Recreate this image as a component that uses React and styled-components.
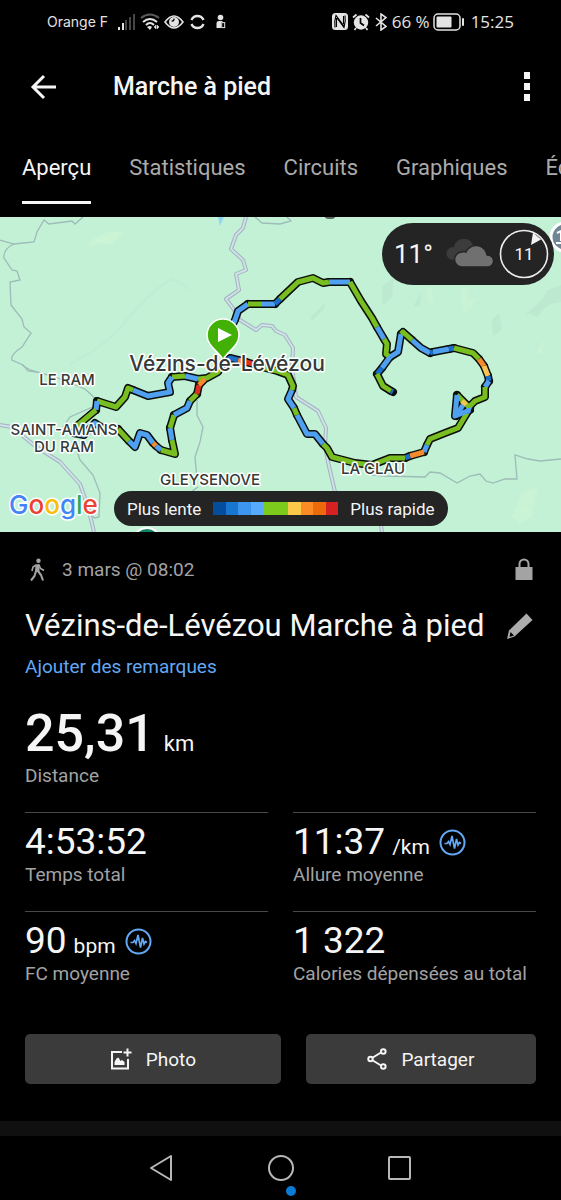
import { useState } from 'react';
import styled, { createGlobalStyle } from 'styled-components';

const COLORS = {
  white: '#f5f5f5',
  grey: '#a3a3a3',
  line: '#484848',
  blue: '#62a8f5',
  panel: '#242424',
};

const GlobalStyle = createGlobalStyle`
  * {
    box-sizing: border-box;
  }
  body {
    margin: 0;
    background: #000000;
    color: ${COLORS.white};
    font-family: Roboto, "Liberation Sans", sans-serif;
    overflow-x: hidden;
  }
  button {
    padding: 0;
    border: 0;
    background: none;
    color: inherit;
    font: inherit;
    cursor: pointer;
  }
  svg {
    display: block;
    flex-shrink: 0;
  }
`;

const Page = styled.div`
  min-height: 100vh;
  display: flex;
  flex-direction: column;
`;
const StatusBar = styled.div`
  display: flex;
  align-items: center;
  justify-content: space-between;
  height: 43px;
  padding: 0 47px;
  color: #e4e4e4;
  font-family: Inter, sans-serif;
`;
const StatusGroup = styled.div`
  display: flex;
  align-items: center;
  gap: ${({ $gap }) => $gap}px;
`;
const Carrier = styled.span`
  font-size: 14px;
  margin-right: 6px;
`;
const StatusText = styled.span`
  font-family: "Open Sans", sans-serif;
  font-size: 17px;
  line-height: 20px;
`;
const AppBar = styled.header`
  display: flex;
  align-items: center;
  height: 87px;
  padding: 0 30px;
`;
const AppTitle = styled.h1`
  flex: 1;
  margin: 0 0 0 56px;
  font-weight: 500;
  font-size: 25px;
  line-height: 32px;
`;
const Tabs = styled.nav`
  display: flex;
  gap: 38px;
  height: 87px;
  padding: 19px 0 0 22px;
  overflow: hidden;
`;
const Tab = styled.button`
  flex-shrink: 0;
  height: 55px;
  padding-bottom: 15px;
  border-bottom: 3px solid ${({ $active }) => ($active ? COLORS.white : 'transparent')};
  color: ${({ $active }) => ($active ? COLORS.white : '#ababab')};
  font-size: 22px;
  line-height: 34px;
`;

const MapWrap = styled.section`
  position: relative;
  height: 315px;
  overflow: hidden;
  background: #c3f1d5;
`;
const Weather = styled.div`
  position: absolute;
  top: 6px;
  right: 7px;
  display: flex;
  align-items: center;
  height: 62px;
  padding: 0 5px 0 12px;
  border-radius: 31px;
  background: ${COLORS.panel};
`;
const Temperature = styled.span`
  width: 51px;
  font-size: 26px;
`;
const Wind = styled.div`
  position: relative;
  display: grid;
  place-items: center;
  width: 50px;
  height: 50px;
  margin-left: 4px;
  font-size: 17px;
  svg {
    position: absolute;
    inset: 0;
  }
`;
const Legend = styled.div`
  position: absolute;
  left: 114px;
  bottom: 6px;
  display: flex;
  align-items: center;
  gap: 12px;
  height: 35px;
  padding: 0 13px;
  border-radius: 18px;
  background: ${COLORS.panel};
  font-size: 17px;
`;
const Scale = styled.div`
  display: flex;
  width: 125px;
  height: 13px;
`;
const Swatch = styled.span`
  flex: ${({ $wide }) => ($wide ? 2 : 1)};
  background: ${({ $color }) => $color};
`;

const Details = styled.main`
  display: flex;
  flex-direction: column;
  padding: 25px 25px 37px;
`;
const MetaRow = styled.div`
  display: flex;
  align-items: center;
  height: 25px;
  padding-right: 3px;
  color: ${COLORS.grey};
`;
const MetaDate = styled.span`
  flex: 1;
  margin-left: 12px;
  font-size: 19px;
`;
const TitleRow = styled.div`
  display: flex;
  align-items: center;
  justify-content: space-between;
  margin-top: 24px;
  padding-right: 3px;
`;
const ActivityTitle = styled.h2`
  margin: 0;
  font-weight: 400;
  font-size: 31px;
  line-height: 40px;
  white-space: nowrap;
`;
const Remarks = styled.a`
  align-self: flex-start;
  margin-top: 9px;
  color: ${COLORS.blue};
  font-size: 19px;
  line-height: 24px;
  text-decoration: none;
`;
const Stat = styled.div`
  padding-top: ${({ $main }) => ($main ? 25 : 8)}px;
  padding-bottom: 25px;
  border-top: ${({ $main }) => ($main ? '0' : `1px solid ${COLORS.line}`)};
`;
const StatLine = styled.div`
  display: flex;
  align-items: center;
  gap: 9px;
`;
const Value = styled.div`
  font-size: ${({ $main }) => ($main ? 52 : 37)}px;
  font-weight: ${({ $main }) => ($main ? 500 : 400)};
  line-height: ${({ $main }) => ($main ? 60 : 42)}px;
`;
const Unit = styled.span`
  margin-left: ${({ $main }) => ($main ? 9 : 7)}px;
  font-size: ${({ $main }) => ($main ? 22 : 21)}px;
  font-weight: 400;
  line-height: 1;
`;
const Label = styled.div`
  color: ${COLORS.grey};
  font-size: 19px;
  line-height: 23px;
`;
const StatGrid = styled.div`
  display: grid;
  grid-template-columns: 1fr 1fr;
  column-gap: 25px;
`;
const Actions = styled.div`
  display: flex;
  gap: 25px;
  margin-top: 24px;
`;
const ActionButton = styled.button`
  flex: ${({ $grow }) => $grow} 1 0;
  display: flex;
  align-items: center;
  justify-content: center;
  gap: 14px;
  height: 50px;
  border-radius: 5px;
  background: #3b3b3b;
  font-size: 19px;
`;
const Divider = styled.div`
  height: 15px;
  background: #101010;
`;
const SystemNav = styled.footer`
  position: relative;
  display: flex;
  align-items: center;
  justify-content: center;
  gap: 91px;
  height: 64px;
`;
const NavDot = styled.span`
  position: absolute;
  left: calc(50% + 5px);
  bottom: 4px;
  width: 10px;
  height: 10px;
  border-radius: 50%;
  background: #0a7bd6;
`;

const TABS = ['Aperçu', 'Statistiques', 'Circuits', 'Graphiques', 'Équipement'];

const LEGEND = [
  { color: '#044c9c' },
  { color: '#1976d0' },
  { color: '#3c95ee' },
  { color: '#58aafb' },
  { color: '#7ccb1c', wide: true },
  { color: '#fbc94a' },
  { color: '#fb8b24' },
  { color: '#ec6a0c' },
  { color: '#d42222' },
];

const STATS = [
  { value: '4:53:52', label: 'Temps total' },
  { value: '11:37', unit: '/km', label: 'Allure moyenne', pulse: true },
  { value: '90', unit: 'bpm', label: 'FC moyenne', pulse: true },
  { value: '1 322', label: 'Calories dépensées au total' },
];

const G = '#78be20';
const B = '#4fa0f0';
const D = '#1b6fc8';
const O = '#f58a2c';
const Y = '#f8c552';
const R = '#dd3020';

// Each piece of the walk: pace colour and its points
const ROUTE = [
  [B, '222,128 235,103 238,94 248,87'],
  [G, '248,87 262,87'],
  [B, '262,87 275,87'],
  [D, '275,87 280,82'],
  [G, '280,82 298,65 313,61 323,66 329,65'],
  [B, '329,65 350,65'],
  [G, '350,65 361,84 372,101 377,110'],
  [B, '377,110 384,122'],
  [G, '384,122 387,127 386,137 390,140'],
  [B, '390,140 398,135 401,117'],
  [G, '401,117 403,115 412,123'],
  [B, '412,123 421,131 430,136'],
  [D, '430,136 433,135'],
  [B, '433,135 449,132'],
  [D, '449,132 454,131'],
  [G, '454,131 473,136 479,142'],
  [O, '479,142 484,149'],
  [Y, '484,149 488,159'],
  [D, '488,159 489,164'],
  [B, '489,164 485,170'],
  [G, '485,170 485,180 475,184 470,189'],
  [B, '470,189 467,196'],
  [G, '467,196 458,211 445,216 430,222 427,228'],
  [B, '427,228 424,235'],
  [O, '424,235 410,239'],
  [D, '410,239 405,241'],
  [G, '405,241 390,241 372,248 355,246 332,240 327,231 323,227'],
  [B, '323,227 315,217 307,217 297,198'],
  [G, '297,198 294,191'],
  [B, '294,191 288,182 292,173'],
  [G, '292,173 293,169 288,158 277,154 262,150'],
  [Y, '262,150 253,147'],
  [R, '253,147 246,145'],
  [O, '246,145 238,143'],
  [D, '238,143 230,141 222,148'],
  [B, '390,140 382,151'],
  [D, '382,151 377,157'],
  [G, '377,157 383,169 391,174'],
  [D, '391,174 393,175'],
  [G, '470,191 457,178'],
  [Y, '466,188 462,184'],
  [B, '457,178 455,199 470,193'],
  [B, '456,199 463,188'],
  [G, '222,148 218,155 207,161 198,162'],
  [B, '198,162 185,159'],
  [G, '185,159 172,160'],
  [B, '172,160 168,166 170,175 148,179 133,173'],
  [G, '133,173 128,171 125,180 116,190 97,184'],
  [B, '97,184 96,193'],
  [G, '96,193 78,208 74,216'],
  [B, '74,216 84,218 95,206 106,213 118,212'],
  [G, '118,212 129,224'],
  [B, '129,224 135,230 140,216 147,218 153,226'],
  [O, '153,226 156,229'],
  [B, '156,229 161,233'],
  [G, '161,233 175,237 172,223'],
  [B, '172,223 170,211'],
  [G, '170,211 174,198'],
  [B, '174,198 187,191 190,184'],
  [G, '190,184 197,177'],
  [R, '197,177 199,168'],
  [O, '199,168 205,162'],
];

const THIN_ROADS = [
  'M83 0L75 7L72 4L49 7L44 3L37 15L34 25L14 27L0 23',
  'M14 27Q3 32 4 41L12 53L17 54L20 63L10 65L11 88L22 102L24 110L31 116L22 130Q10 138 12 143L23 148L28 154L37 155',
  'M22 148L30 153L55 160L85 172L97 183M97 188L70 200L63 210',
  'M76 231L80 243L93 258L100 276L99 300L95 301L86 296',
  'M197 183L197 198L203 210L200 225L195 240L197 262M198 270L187 278',
  'M372 258L385 259L425 260L430 255L440 256L457 266L470 259L480 257L486 264L493 266L505 262L517 262L515 238L528 242L540 244L561 242',
  'M255 0L262 6L280 7L291 4L287 0',
];
const MAIN_ROADS = [
  'M246 0L243 11L236 18L231 32L243 43L246 53L236 57L239 73L226 82L235 94L240 103L256 113L262 108L272 109L276 114L285 118L293 131L292 150L296 180L318 194L326 211L325 228L328 245L335 275L380 302L382 315',
  'M0 208L12 210L35 229L60 245L80 267L88 290L94 315',
];

const SignalIcon = () => (
  <svg width="18" height="18" viewBox="0 0 18 18" fill="currentColor">
    <rect x="0" y="14" width="2" height="3" />
    <rect x="4" y="10" width="2" height="7" />
    <g opacity="0.3">
      <rect x="7" y="7" width="2" height="10" />
      <rect x="11" y="4" width="2" height="13" />
      <rect x="15" y="1" width="2" height="16" />
    </g>
  </svg>
);
const WifiIcon = () => (
  <svg width="20" height="18" viewBox="0 0 20 18" fill="none" stroke="currentColor" strokeWidth="2">
    <path d="M1 5Q10 -2 19 5" opacity="0.4" />
    <path d="M3 9Q10 3 17 9M6 12Q10 8 14 12" />
    <path d="M7 14Q10 12 12 14L10 17Z" fill="currentColor" stroke="none" />
    <path d="M14 14l2-2v4zM19 14l-2-2v4z" fill="currentColor" strokeWidth="0.5" />
  </svg>
);
const EyeIcon = () => (
  <svg width="20" height="16" viewBox="0 0 20 16">
    <path d="M1 8Q10 -4 19 8Q10 20 1 8Z" fill="none" stroke="currentColor" strokeWidth="1.6" />
    <circle cx="10" cy="8" r="5" fill="currentColor" />
    <path d="M10 4A4 4 0 0 1 7 7A2 2 0 0 0 10 4" fill="#000000" />
  </svg>
);
const SyncIcon = () => (
  <svg width="24" height="16" viewBox="-2 0 24 16" fill="none" stroke="currentColor" strokeWidth="2.4">
    <path d="M1.5 6A6.5 6.5 0 0 1 13.5 6M1.5 10A6.5 6.5 0 0 0 13.5 10" />
  </svg>
);
const GuardIcon = () => (
  <svg width="10" height="16" viewBox="0 0 10 16">
    <circle cx="4.5" cy="3.5" r="2.8" fill="currentColor" />
    <path d="M0.5 14V9Q0.5 7 3 7H6L7 8H5V14Z" fill="currentColor" />
    <rect x="5.7" y="8.6" width="3" height="5" fill="none" stroke="currentColor" />
  </svg>
);
const NfcIcon = () => (
  <svg width="17" height="17" viewBox="0 0 17 17">
    <rect width="16" height="17" rx="3.5" fill="currentColor" />
    <path d="M3 14.5Q2 8 4 2.5L12 13M13 2.5Q14 8 12 14.5L5 5M4.5 5V14M11.5 3V11" fill="none" stroke="#000000" strokeWidth="1.1" />
  </svg>
);
const AlarmIcon = () => (
  <svg width="20" height="18" viewBox="0 0 20 18">
    <circle cx="9" cy="9.5" r="7.2" fill="currentColor" />
    <path d="M1 4.5L4.5 1.5M17 4.5L13.5 1.5M4 15L2.5 17M14 15L15.5 17" stroke="currentColor" strokeWidth="1.7" />
    <path d="M8.5 5V10L12 12.5" fill="none" stroke="#000000" strokeWidth="1.7" />
  </svg>
);
const BluetoothIcon = () => (
  <svg width="14" height="18" viewBox="0 0 14 18" fill="none" stroke="currentColor" strokeWidth="1.6">
    <path d="M1 5L11 13.5L6 17V1L11 4.5L1 13" />
  </svg>
);
const BatteryIcon = () => (
  <svg width="35" height="18" viewBox="0 0 35 18">
    <rect x="1" y="1" width="26" height="16" rx="4" fill="none" stroke="currentColor" strokeWidth="1.5" />
    <rect x="3.5" y="3.5" width="15" height="11" rx="1" fill="currentColor" />
    <rect x="29" y="5" width="2" height="8" rx="1" fill="currentColor" />
  </svg>
);
const BackIcon = () => (
  <svg width="27" height="26" viewBox="0 0 27 26" fill="none" stroke="currentColor" strokeWidth="3">
    <path d="M26 13H4M14 2L3 13L14 24" />
  </svg>
);
const MoreIcon = () => (
  <svg width="8" height="30" viewBox="0 0 8 30" fill="currentColor">
    <rect x="1" y="0" width="6" height="7" />
    <rect x="1" y="11" width="6" height="7" />
    <rect x="1" y="22" width="6" height="7" />
  </svg>
);
const CloudIcon = () => (
  <svg width="50" height="30" viewBox="0 0 50 30">
    <path d="M8 21A6.5 6.5 0 0 1 8 8H9A10 10 0 0 1 28 6V21Z" fill="#3c3c3c" />
    <path
      d="M17 28A7.5 7.5 0 0 1 17 13Q19 12 21 13A11 11 0 0 1 42 16A6 6 0 0 1 43 28Z"
      fill="#707070"
      stroke={COLORS.panel}
      strokeWidth="1.5"
    />
  </svg>
);
const WindDial = () => (
  <svg width="50" height="50" viewBox="0 0 50 50">
    <circle cx="25" cy="25" r="23.5" fill="none" stroke="#ededed" strokeWidth="1.6" />
    <path d="M34 3.5L42 10.5L32 16Z" fill="#f4f4f4" />
  </svg>
);
const WalkIcon = () => (
  <svg width="25" height="24" viewBox="0 0 25 24" fill="none" stroke="currentColor">
    <circle cx="13.5" cy="2.8" r="2.2" fill="currentColor" stroke="none" />
    <path d="M10.5 6.5L14.5 6L14.5 14L10 14Z" fill="currentColor" stroke="none" />
    <path d="M11 7L8 9L7 13M14 7L15.5 10.5L19 12.5" strokeWidth="1.7" />
    <path d="M11 13L9.5 18L6 22.5M13 13L16 17L18 22.5" strokeWidth="2.1" />
  </svg>
);
const LockIcon = () => (
  <svg width="18" height="23" viewBox="0 0 18 23">
    <rect x="0.5" y="9" width="17" height="13" fill="currentColor" />
    <path d="M4.5 9V6A4.5 4.5 0 0 1 13.5 6V9" fill="none" stroke="currentColor" strokeWidth="2" />
  </svg>
);
const PencilIcon = () => (
  <svg width="27" height="27" viewBox="0 0 27 27">
    <path d="M20.5 0.5L26.5 7L8.5 23.5L1 26L3 17.5Z" fill="#adadad" />
    <path d="M4.5 19L8 22.5L3.5 24Z" fill="#000000" />
  </svg>
);
const PulseIcon = () => (
  <svg width="27" height="27" viewBox="0 0 27 27" fill="none" stroke={COLORS.blue}>
    <circle cx="13.5" cy="13.5" r="12" strokeWidth="2" />
    <path d="M5.5 14.5H8L9.5 12.5L11 15.5L13 7L15.5 19.5L17.5 10L19 16L20.5 13.5L22 14.5" strokeWidth="1.7" />
  </svg>
);
const PhotoIcon = () => (
  <svg width="22" height="22" viewBox="0 0 22 22">
    <path d="M12 4H2V20.5H18V11" fill="none" stroke="currentColor" strokeWidth="2" />
    <path d="M17.5 0.5V8.5M13.5 4.5H21.5" stroke="currentColor" strokeWidth="2" />
    <path d="M4.5 17V14L6.5 10.5L8.5 9.5L10.5 13L12 12L14.5 14V17Z" fill="currentColor" />
  </svg>
);
const ShareIcon = () => (
  <svg width="20" height="22" viewBox="0 0 20 22" fill="none" stroke="currentColor" strokeWidth="2">
    <path d="M5 10L14 4.5M5 12L14 17.5" />
    <circle cx="3.5" cy="11" r="2.2" />
    <circle cx="16.3" cy="3.5" r="2.3" />
    <circle cx="16.3" cy="18.5" r="2.3" />
  </svg>
);

const NAV_ITEMS = [
  { label: 'Retour', shape: <path d="M23 2V26L3 14Z" /> },
  { label: 'Accueil', shape: <circle cx="14" cy="14" r="12" /> },
  { label: 'Récents', shape: <rect x="3" y="3" width="21" height="22" rx="1" /> },
];

const TrackMap = () => (
  <svg width="100%" height="100%" viewBox="0 0 561 315" preserveAspectRatio="xMidYMid slice">
    <rect width="561" height="315" fill="#c3f1d5" />
    <path d="M88 28Q90 22 100 19Q110 12 124 16L112 27L98 26L92 30Z" fill="#cbf4d5" />
    <g fill="#b8e5cc" opacity="0.6">
      <path d="M382 70L394 60L392 80L383 88Z" />
      <path d="M526 96Q540 88 548 73L561 68V85Q545 86 538 100Z" />
      <path d="M414 88L422 75L419 90Z" />
      <path d="M492 103L499 96L502 112L493 119Z" />
      <path d="M311 100L325 86L324 92L312 104Z" />
    </g>
    <g fill="#cdf5d6" opacity="0.7">
      <path d="M460 73L468 70L467 83L477 82L464 97Z" />
      <path d="M427 72L431 70L434 84L428 87Z" />
      <path d="M512 300L522 275L538 270L532 300L520 306Z" />
      <path d="M536 136L544 122L542 137Z" />
    </g>
    <path d="M218 0H224L220 9Z" fill="#8fd7ee" />
    <ellipse cx="330" cy="0" rx="5" ry="2" fill="#5e6b66" />
    <g fill="none" stroke="#9dbbb8" strokeWidth="1.3">
      {THIN_ROADS.map((d) => (
        <path key={d} d={d} />
      ))}
    </g>
    <path d="M70 147Q105 130 125 105Q155 70 173 62L190 72" fill="none" stroke="#bfecd6" strokeWidth="2" />
    <g fill="none" strokeLinejoin="round">
      {MAIN_ROADS.map((d) => (
        <path key={d} d={d} stroke="#a3b1c4" strokeWidth="4" />
      ))}
      {MAIN_ROADS.map((d) => (
        <path key={d} d={d} stroke="#cfe2e4" strokeWidth="2" />
      ))}
    </g>
    <g fill="none" stroke="#0b0f0c" strokeWidth="8" strokeLinejoin="round" strokeLinecap="round">
      {ROUTE.map(([, points]) => (
        <polyline key={points} points={points} />
      ))}
    </g>
    <g fill="none" strokeWidth="5" strokeLinejoin="round">
      {ROUTE.map(([color, points]) => (
        <polyline key={points} points={points} stroke={color} />
      ))}
    </g>
    <path
      d="M223 143C220 135 207 130 207 118A16 16 0 0 1 239 118C239 130 226 135 223 143Z"
      fill="#43b005"
      stroke="#ffffff"
      strokeWidth="1.5"
    />
    <path d="M218 111L232 118L218 125Z" fill="#ffffff" />
    <g
      fill="#333a38"
      stroke="#ffffff"
      strokeWidth="3"
      strokeLinejoin="round"
      paintOrder="stroke"
      textAnchor="middle"
      fontFamily="Inter, sans-serif"
      fontSize="15"
      fontWeight="500"
    >
      <text x="227" y="154" fontSize="21">Vézins-de-Lévézou</text>
      <text x="67" y="168">LE RAM</text>
      <text x="64" y="218">SAINT-AMANS</text>
      <text x="64" y="235">DU RAM</text>
      <text x="210" y="268">GLEYSENOVE</text>
      <text x="373" y="257">LA CLAU</text>
    </g>
    <text
      x="9"
      y="297"
      fontFamily="Inter, sans-serif"
      fontSize="26"
      fontWeight="500"
      stroke="#ffffff"
      strokeWidth="3"
      strokeLinejoin="round"
      paintOrder="stroke"
    >
      <tspan fill="#4285f4">G</tspan>
      <tspan fill="#ea4335">o</tspan>
      <tspan fill="#fbbc05">o</tspan>
      <tspan fill="#4285f4">g</tspan>
      <tspan fill="#34a853">l</tspan>
      <tspan fill="#ea4335">e</tspan>
    </text>
    <circle cx="147" cy="325" r="14" fill="#128466" stroke="#ffffff" strokeWidth="2" />
    <circle cx="565" cy="20" r="14" fill="#6f8795" stroke="#ffffff" strokeWidth="3" />
    <path d="M557 16L561 14V24M556 26H561" fill="none" stroke="#ffffff" strokeWidth="2" />
  </svg>
);

const StatItem = ({ value, unit, label, pulse, main }) => (
  <Stat $main={main}>
    <StatLine>
      <Value $main={main}>
        {value}
        {unit && <Unit $main={main}>{unit}</Unit>}
      </Value>
      {pulse && <PulseIcon />}
    </StatLine>
    <Label>{label}</Label>
  </Stat>
);

const App = () => {
  const [activeTab, setActiveTab] = useState(TABS[0]);

  return (
    <Page>
      <GlobalStyle />
      <StatusBar>
        <StatusGroup $gap={4}>
          <Carrier>Orange F</Carrier>
          <SignalIcon />
          <WifiIcon />
          <EyeIcon />
          <SyncIcon />
          <GuardIcon />
        </StatusGroup>
        <StatusGroup $gap={3}>
          <NfcIcon />
          <AlarmIcon />
          <BluetoothIcon />
          <StatusText>66 %</StatusText>
          <BatteryIcon />
          <StatusText>15:25</StatusText>
        </StatusGroup>
      </StatusBar>
      <AppBar>
        <button type="button" aria-label="Retour">
          <BackIcon />
        </button>
        <AppTitle>Marche à pied</AppTitle>
        <button type="button" aria-label="Plus">
          <MoreIcon />
        </button>
      </AppBar>
      <Tabs>
        {TABS.map((tab) => (
          <Tab key={tab} type="button" $active={tab === activeTab} onClick={() => setActiveTab(tab)}>
            {tab}
          </Tab>
        ))}
      </Tabs>
      <MapWrap>
        <TrackMap />
        <Weather>
          <Temperature>11°</Temperature>
          <CloudIcon />
          <Wind>
            <WindDial />
            11
          </Wind>
        </Weather>
        <Legend>
          <span>Plus lente</span>
          <Scale>
            {LEGEND.map(({ color, wide }) => (
              <Swatch key={color} $color={color} $wide={wide} />
            ))}
          </Scale>
          <span>Plus rapide</span>
        </Legend>
      </MapWrap>
      <Details>
        <MetaRow>
          <WalkIcon />
          <MetaDate>3 mars @ 08:02</MetaDate>
          <button type="button" aria-label="Confidentialité">
            <LockIcon />
          </button>
        </MetaRow>
        <TitleRow>
          <ActivityTitle>Vézins-de-Lévézou Marche à pied</ActivityTitle>
          <button type="button" aria-label="Modifier">
            <PencilIcon />
          </button>
        </TitleRow>
        <Remarks href="#remarques">Ajouter des remarques</Remarks>
        <StatItem main value="25,31" unit="km" label="Distance" />
        <StatGrid>
          {STATS.map((stat) => (
            <StatItem key={stat.label} {...stat} />
          ))}
        </StatGrid>
        <Actions>
          <ActionButton type="button" $grow={10}>
            <PhotoIcon />
            Photo
          </ActionButton>
          <ActionButton type="button" $grow={9}>
            <ShareIcon />
            Partager
          </ActionButton>
        </Actions>
      </Details>
      <Divider />
      <SystemNav>
        {NAV_ITEMS.map(({ label, shape }) => (
          <button key={label} type="button" aria-label={label}>
            <svg width="28" height="28" viewBox="0 0 28 28" fill="none" stroke="#b8b8b8" strokeWidth="2" strokeLinejoin="round">
              {shape}
            </svg>
          </button>
        ))}
        <NavDot />
      </SystemNav>
    </Page>
  );
};
export default App;
